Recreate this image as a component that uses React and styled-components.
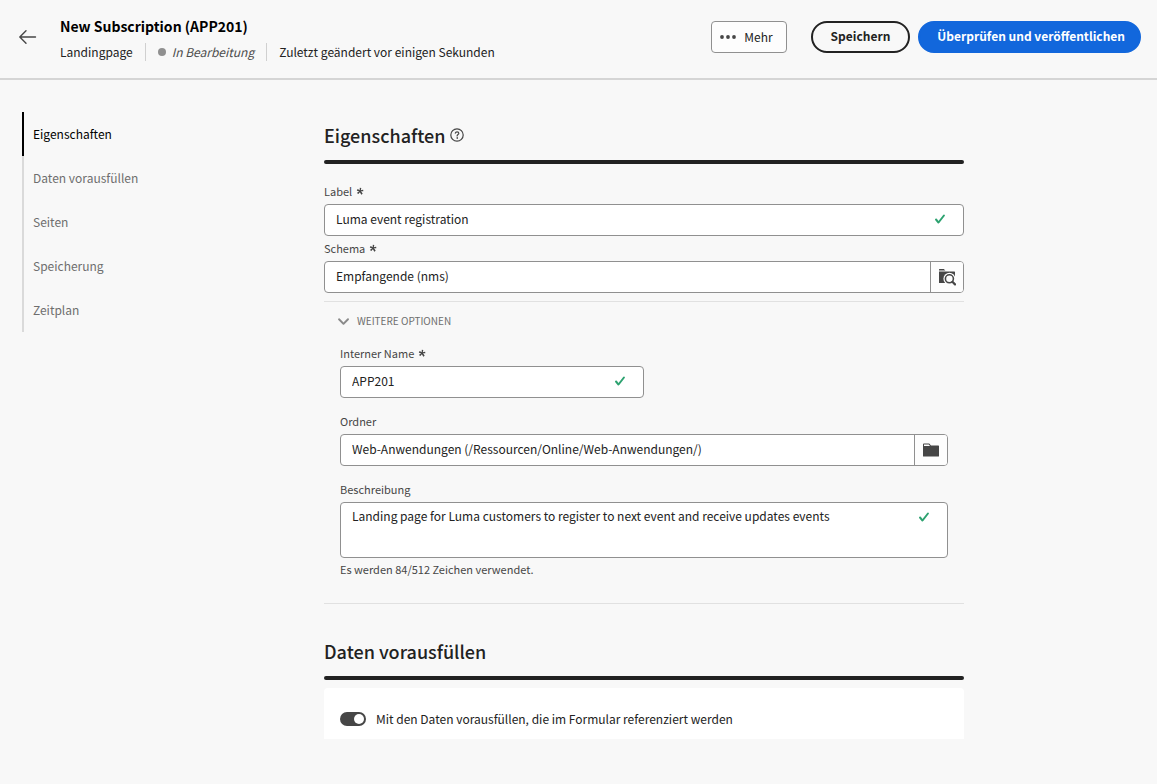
import React, { useState } from "react";
import styled, { createGlobalStyle, css } from "styled-components";

const GlobalStyle = createGlobalStyle`
  *, *::before, *::after { box-sizing: border-box; }
  body {
    margin: 0;
    background: #f8f8f8;
    color: #222;
    font-family: "Noto Sans CJK JP", "Noto Sans", sans-serif;
    font-size: 12px;
    line-height: 20px;
  }
  button, input, textarea { font: inherit; color: inherit; }
`;

const Header = styled.header`
  display: flex;
  align-items: center;
  height: 80px;
  padding: 0 16px 4px 18px;
  border-bottom: 2px solid #d5d5d5;
`;

const BackButton = styled.button`
  display: flex;
  padding: 0;
  margin-right: 22px;
  border: 0;
  background: none;
  cursor: pointer;
`;

const TitleBlock = styled.div`
  flex: 1;
  min-width: 0;
`;

const Title = styled.h1`
  margin: 0;
  font-size: 14px;
  font-weight: 700;
  line-height: 24px;
  color: #000;
`;

const Meta = styled.div`
  display: flex;
  align-items: center;
  margin-top: 5px;
`;

const MetaItem = styled.span`
  display: flex;
  align-items: center;
  gap: 6px;
  line-height: 18px;
  padding: 0 12px;
  border-left: 1px solid #d0d0d0;
  font-style: ${(p) => (p.$italic ? "italic" : "normal")};
  color: ${(p) => (p.$italic ? "#4b4b4b" : "#222")};
  &:first-child { padding-left: 0; border-left: 0; }
`;

const StatusDot = styled.span`
  width: 8px;
  height: 8px;
  border-radius: 50%;
  background: #909090;
`;

const Actions = styled.div`
  display: flex;
  gap: 8px;
`;

const MoreButton = styled.button`
  display: flex;
  align-items: center;
  gap: 8px;
  height: 32px;
  margin-right: 16px;
  padding: 0 13px 0 8px;
  border: 1px solid #909090;
  border-radius: 4px;
  background: #fdfdfd;
  cursor: pointer;
`;

const PillButton = styled.button`
  height: 32px;
  padding: ${(p) => (p.$primary ? "0 14px 2px 17px" : "0 18px 2px")};
  border: 2px solid ${(p) => (p.$primary ? "#1267dc" : "#222")};
  border-radius: 16px;
  background: ${(p) => (p.$primary ? "#1267dc" : "transparent")};
  color: ${(p) => (p.$primary ? "#fff" : "#222")};
  font-weight: 700;
  line-height: 24px;
  white-space: nowrap;
  cursor: pointer;
`;

const Body = styled.div`
  display: flex;
  align-items: flex-start;
`;

const SideNav = styled.nav`
  flex: 0 0 302px;
  margin-left: 22px;
  padding-top: 32px;
`;

const NavLink = styled.a`
  display: block;
  padding-left: 9px;
  border-left: 2px solid ${(p) => (p.$active ? "#000" : "#dadada")};
  color: ${(p) => (p.$active ? "#000" : "#6e6e6e")};
  line-height: 44px;
  text-decoration: none;
`;

const Main = styled.main`
  flex: 0 1 640px;
  min-width: 0;
  padding: 42px 0;
`;

const SectionTitle = styled.h2`
  display: flex;
  align-items: center;
  gap: 5px;
  margin: 0 0 12px;
  font-size: 18px;
  font-weight: 500;
  line-height: 26px;
`;

const HelpButton = styled.button`
  display: flex;
  padding: 0;
  border: 0;
  background: none;
  cursor: pointer;
`;

const SectionBar = styled.div`
  height: 4px;
  border-radius: 2px;
  background: #222;
`;

const Divider = styled.hr`
  height: 1px;
  margin: 0;
  border: 0;
  background: #e1e1e1;
`;

const FieldStack = styled.div`
  display: flex;
  flex-direction: column;
  gap: ${(p) => p.$gap}px;
  padding: ${(p) => p.$padding};
`;

const FieldBlock = styled.div`
  width: ${(p) => (p.$half ? "50%" : "100%")};
`;

const FieldLabel = styled.label`
  display: flex;
  align-items: center;
  gap: 4px;
  padding-bottom: 2px;
  color: #464646;
  font-size: 11px;
  line-height: 22px;
`;

const FieldFrame = styled.div`
  display: flex;
  align-items: stretch;
  min-height: 32px;
  border: 1px solid #909090;
  border-radius: 4px;
  background: #fff;
  overflow: hidden;
`;

const control = css`
  flex: 1;
  min-width: 0;
  border: 0;
  outline: 0;
  background: transparent;
`;

const TextInput = styled.input`
  ${control}
  height: 30px;
  padding: 0 11px 4px;
`;

const TextArea = styled.textarea`
  ${control}
  display: block;
  height: 54px;
  padding: 3px 11px;
  resize: none;
`;

const CheckSlot = styled.span`
  padding: 8px 17px 0 0;
  line-height: 0;
`;

const PickButton = styled.button`
  display: flex;
  align-items: center;
  justify-content: center;
  width: 33px;
  padding: 0;
  border: 0;
  border-left: 1px solid #909090;
  background: #fdfdfd;
  cursor: pointer;
`;

const HelpText = styled.p`
  margin: 0;
  color: #464646;
  font-size: 11px;
  line-height: 22px;
`;

const Disclosure = styled.button`
  display: flex;
  align-items: center;
  gap: 8px;
  height: 40px;
  padding: 0 14px 2px;
  border: 0;
  background: none;
  color: #6e6e6e;
  font-size: 10px;
  text-transform: uppercase;
  cursor: pointer;
`;

const Section = styled.section`
  padding-top: ${(p) => (p.$spaced ? 34 : 0)}px;
`;

const Panel = styled.div`
  margin-top: 8px;
  padding: 19px 16px 8px;
  border-radius: 4px 4px 0 0;
  background: #fff;
`;

const SwitchLabel = styled.label`
  display: flex;
  align-items: center;
  gap: 10px;
  line-height: 24px;
  cursor: pointer;
`;

const SwitchInput = styled.input`
  appearance: none;
  display: flex;
  align-items: center;
  justify-content: ${(p) => (p.checked ? "flex-end" : "flex-start")};
  width: 26px;
  height: 14px;
  margin: 0;
  padding: 0 2px;
  border-radius: 7px;
  background: ${(p) => (p.checked ? "#464646" : "#b1b1b1")};
  cursor: pointer;
  &::before {
    content: "";
    width: 10px;
    height: 10px;
    border-radius: 50%;
    background: #fff;
  }
`;

const ArrowIcon = () => (
  <svg width="20" height="20" viewBox="0 0 20 20" fill="none" stroke="#464646" strokeWidth="1.4" strokeLinecap="round" strokeLinejoin="round">
    <path d="M17.5 10H2M8 3.8L1.8 10L8 16.2" />
  </svg>
);

const DotsIcon = () => (
  <svg width="16" height="6" viewBox="0 0 16 6" fill="#464646">
    <circle cx="2" cy="3" r="1.9" />
    <circle cx="8" cy="3" r="1.9" />
    <circle cx="14" cy="3" r="1.9" />
  </svg>
);

const AsteriskIcon = () => (
  <svg width="8" height="8" viewBox="0 0 8 8" fill="#464646" aria-hidden="true">
    <path d="M6.575 6.555c.055.056.092.13 0 .204l-1.2.907c-.093.074-.148.019-.185-.073l-1.297-2.315-1.613 1.761c-.055.056-.147.092-.221 0l-.944-1.07c-.093-.074-.074-.129.018-.203l1.981-1.557-2.148-.541c-.074 0-.147-.092-.111-.185L1.504 2.157a.138.138 0 0 1 .203-.074l1.944 1.11.13-2.315A.136.136 0 0 1 3.9.73l1.317.166c.092 0 .11.055.092.147l-.5 2.241 2.139-.63c.074-.036.147-.018.184.111l.222 1.297c.018.092 0 .13-.093.13l-2.224.176z" />
  </svg>
);

const CheckIcon = () => (
  <svg width="12" height="12" viewBox="-1 -1 12 12" fill="#2da270">
    <path d="M3.5 9.5a.999.999 0 01-.774-.368l-2.45-3a1 1 0 111.548-1.264l1.657 2.028 4.68-6.01A1 1 0 019.74 2.114l-5.45 7a1 1 0 01-.777.386z" />
  </svg>
);

const ChevronIcon = () => (
  <svg width="11" height="11" viewBox="0 0 10 10" fill="#8a8a8a">
    <path transform="rotate(90 5 5)" d="M3 9.95a.875.875 0 01-.615-1.498L5.88 5 2.385 1.547A.875.875 0 013.615.302L7.74 4.377a.876.876 0 010 1.246L3.615 9.698A.872.872 0 013 9.95z" />
  </svg>
);

const HelpIcon = () => (
  <svg width="14" height="14" viewBox="0 0 14 14" fill="none" stroke="#464646" strokeWidth="1.2" strokeLinecap="round">
    <circle cx="7" cy="7" r="6.2" />
    <path d="M5.3 5.2C5.5 4.2 6.2 3.8 7.1 3.8C8.1 3.8 8.8 4.4 8.8 5.3C8.8 6.6 7.1 6.6 7.1 8" />
    <circle cx="7.1" cy="10" r="0.4" fill="#464646" strokeWidth="0.8" />
  </svg>
);

const FolderIcon = () => (
  <svg width="16" height="14" viewBox="0 0 16 14">
    <path fill="#464646" d="M0 1.4A.9.9 0 0 1 .9.5H6.2L8 2.5H15.4a.6.6 0 0 1 .6.6V12.9a.6.6 0 0 1-.6.6H.6a.6.6 0 0 1-.6-.6Z" />
    <path fill="#fdfdfd" d="M1 1.5H5.8L7 3H1Z" />
  </svg>
);

const FolderSearchIcon = () => (
  <svg width="18" height="18" viewBox="0 0 18 18">
    <path fill="#464646" d="M1 1.6A.6.6 0 0 1 1.6 1H5.8L7.4 2.6H1ZM1 3.6H16.4a.6.6 0 0 1 .6.6V14.4a.6.6 0 0 1-.6.6H1Z" />
    <circle cx="11.4" cy="10.8" r="6" fill="#fdfdfd" />
    <path fill="#fdfdfd" d="M13 10H18V18H11Z" />
    <circle cx="11.4" cy="10.8" r="4" fill="none" stroke="#464646" strokeWidth="1.6" />
    <path d="M14.4 13.8L17 16.4" stroke="#464646" strokeWidth="2.2" strokeLinecap="round" />
  </svg>
);

const NAV_ITEMS = ["Eigenschaften", "Daten vorausfüllen", "Seiten", "Speicherung", "Zeitplan"];

function Field({ id, label, value, required, valid, half, multiline, pickIcon, pickLabel, help }) {
  const Control = multiline ? TextArea : TextInput;
  return (
    <FieldBlock $half={half}>
      <FieldLabel htmlFor={id}>
        {label}
        {required && <AsteriskIcon />}
      </FieldLabel>
      <FieldFrame>
        <Control id={id} defaultValue={value} required={required} spellCheck={false} />
        {valid && <CheckSlot><CheckIcon /></CheckSlot>}
        {pickIcon && <PickButton type="button" aria-label={pickLabel}>{pickIcon}</PickButton>}
      </FieldFrame>
      {help && <HelpText>{help}</HelpText>}
    </FieldBlock>
  );
}

export default function App() {
  const [open, setOpen] = useState(true);
  const [prefill, setPrefill] = useState(true);

  return (
    <>
      <GlobalStyle />
      <Header>
        <BackButton type="button" aria-label="Zurück"><ArrowIcon /></BackButton>
        <TitleBlock>
          <Title>New Subscription (APP201)</Title>
          <Meta>
            <MetaItem>Landingpage</MetaItem>
            <MetaItem $italic><StatusDot />In Bearbeitung</MetaItem>
            <MetaItem>Zuletzt geändert vor einigen Sekunden</MetaItem>
          </Meta>
        </TitleBlock>
        <Actions>
          <MoreButton type="button"><DotsIcon />Mehr</MoreButton>
          <PillButton type="button">Speichern</PillButton>
          <PillButton type="button" $primary>Überprüfen und veröffentlichen</PillButton>
        </Actions>
      </Header>
      <Body>
        <SideNav>
          {NAV_ITEMS.map((item, i) => (
            <NavLink key={item} href="#" $active={i === 0}>{item}</NavLink>
          ))}
        </SideNav>
        <Main>
          <Section>
            <SectionTitle>
              Eigenschaften
              <HelpButton type="button" aria-label="Hilfe"><HelpIcon /></HelpButton>
            </SectionTitle>
            <SectionBar />
            <FieldStack $gap={1} $padding="16px 0 8px">
              <Field id="label" label="Label" value="Luma event registration" required valid />
              <Field id="schema" label="Schema" value="Empfangende (nms)" required pickIcon={<FolderSearchIcon />} pickLabel="Schema auswählen" />
            </FieldStack>
            <Divider />
            <Disclosure type="button" aria-expanded={open} onClick={() => setOpen(!open)}>
              <ChevronIcon />Weitere Optionen
            </Disclosure>
            {open && (
              <FieldStack $gap={12} $padding="0 16px 23px">
                <Field id="name" label="Interner Name" value="APP201" required valid half />
                <Field id="folder" label="Ordner" value="Web-Anwendungen (/Ressourcen/Online/Web-Anwendungen/)" pickIcon={<FolderIcon />} pickLabel="Ordner auswählen" />
                <Field id="description" label="Beschreibung" value="Landing page for Luma customers to register to next event and receive updates events" valid multiline help="Es werden 84/512 Zeichen verwendet." />
              </FieldStack>
            )}
            <Divider />
          </Section>
          <Section $spaced>
            <SectionTitle>Daten vorausfüllen</SectionTitle>
            <SectionBar />
            <Panel>
              <SwitchLabel>
                <SwitchInput type="checkbox" role="switch" checked={prefill} onChange={(e) => setPrefill(e.target.checked)} />
                Mit den Daten vorausfüllen, die im Formular referenziert werden
              </SwitchLabel>
            </Panel>
          </Section>
        </Main>
      </Body>
    </>
  );
}
